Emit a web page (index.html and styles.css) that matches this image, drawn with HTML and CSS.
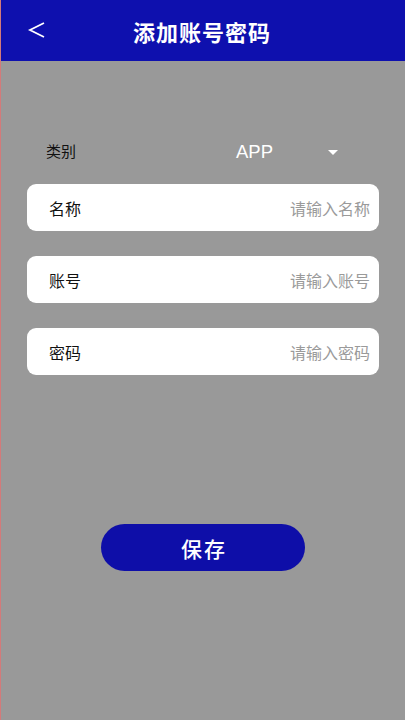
FILE: index.html
```html
<!DOCTYPE html>
<html lang="zh">
<head>
<meta charset="utf-8">
<link rel="stylesheet" href="styles.css">
</head>
<body>
<div class="app">
  <header class="topbar">
    <svg class="back" width="20" height="20" viewBox="0 0 20 20"><path d="M17 3 L3 10 L17 17" fill="none" stroke="#fff" stroke-width="1.8"/></svg>
    <h1 class="title">添加账号密码</h1>
  </header>
  <main class="content">
    <div class="cat-row">
      <span class="cat-label">类别</span>
      <span class="cat-value">APP</span>
      <span class="caret"></span>
    </div>
    <div class="field"><span class="f-label">名称</span><span class="f-ph">请输入名称</span></div>
    <div class="field"><span class="f-label">账号</span><span class="f-ph">请输入账号</span></div>
    <div class="field"><span class="f-label">密码</span><span class="f-ph">请输入密码</span></div>
    <button class="save">保存</button>
  </main>
</div>
</body>
</html>
```
FILE: styles.css
```css
html, body { margin: 0; padding: 0; }
body {
  width: 405px; height: 720px; overflow: hidden;
  font-family: "Noto Sans CJK SC", "Noto Sans", sans-serif;
  background: #999999;
}
.app {
  height: 720px;
  display: flex; flex-direction: column;
  border-left: 1px solid #d37a7a;
  box-sizing: border-box;
}
.topbar {
  height: 61px; flex: none;
  background: #0e10ae;
  display: flex; align-items: center; justify-content: center;
  position: relative;
}
.back { position: absolute; left: 26px; top: 20px; }
.title {
  margin: 0 0 0 -2px; color: #fff; font-size: 22px; font-weight: 700;
  letter-spacing: 1px;
}
.content {
  flex: 1;
  display: flex; flex-direction: column;
  padding: 0 26px 0 26px;
}
.cat-row {
  margin-top: 78px; height: 26px;
  display: flex; align-items: center;
  padding-left: 19px;
}
.cat-label { font-size: 15px; color: #111; width: 190px; margin-top: -3px; }
.cat-value { font-family: "Liberation Sans", Arial, sans-serif; font-size: 18.5px; color: #fff; width: 92px; }
.caret {
  width: 0; height: 0;
  border-left: 5px solid transparent; border-right: 5px solid transparent;
  border-top: 5px solid #fff;
}
.field {
  height: 47px; margin-top: 19px;
  background: #fff; border-radius: 9px;
  display: flex; align-items: center; justify-content: space-between;
  padding: 0 9px 0 22px;
}
.field + .field { margin-top: 25px; }
.f-label { font-size: 16px; color: #111; }
.f-ph { font-size: 16px; color: #9a9a9a; }
.save {
  margin: 149px 0 0 74px;
  width: 204px; height: 47px;
  border: none; border-radius: 24px;
  background: #0e0ea8; color: #fff;
  font-family: "Noto Sans CJK SC", sans-serif;
  font-size: 21px; font-weight: 500;
  letter-spacing: 2px; text-indent: 2px;
}
```
